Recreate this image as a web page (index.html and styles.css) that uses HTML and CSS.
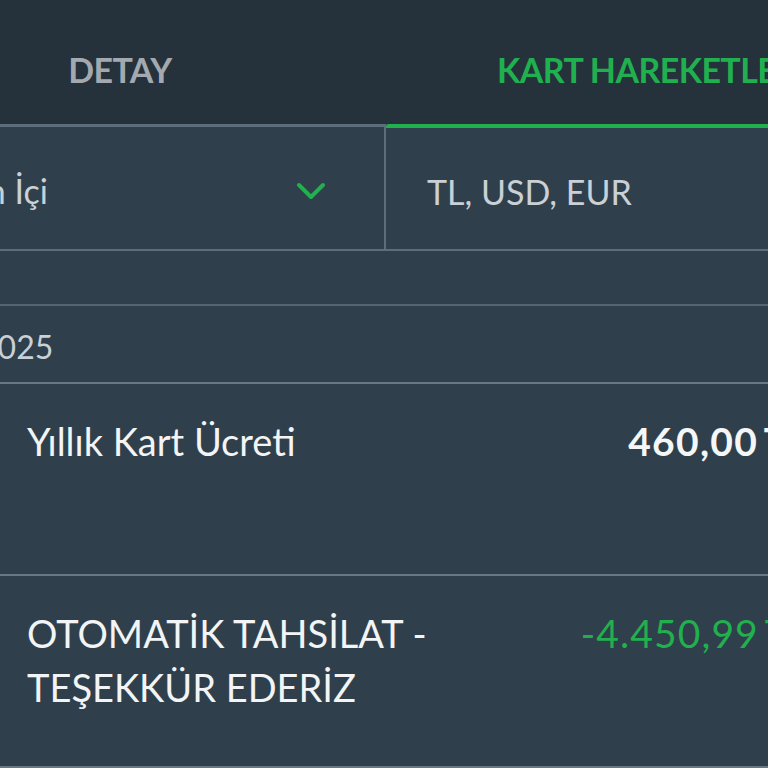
FILE: index.html
```html
<!DOCTYPE html>
<html lang="tr">
<head>
<meta charset="utf-8">
<title>Kart Hareketleri</title>
<link rel="stylesheet" href="styles.css">
</head>
<body>
<div class="screen">
  <div class="canvas">
    <div class="tabs">
      <div class="tab">DETAY</div>
      <div class="tab tab-active">KART HAREKETLERİ</div>
    </div>
    <div class="filters">
      <div class="filter filter-left">
        <span class="filter-text">Dönem İçi</span>
        <svg class="chevron" width="30" height="18" viewBox="0 0 30 18"><path d="M3 3 L15 15 L27 3" fill="none" stroke="#22b04f" stroke-width="4" stroke-linecap="round" stroke-linejoin="round"/></svg>
      </div>
      <div class="filter filter-right">
        <span class="filter-text">TL, USD, EUR</span>
      </div>
    </div>
    <div class="spacer-row"></div>
    <div class="date-row"><span class="date-text">Ocak 2025</span></div>
    <div class="item">
      <div class="item-desc">Yıllık Kart Ücreti</div>
      <div class="item-amount">460,00 TL</div>
    </div>
    <div class="item">
      <div class="item-desc">OTOMATİK TAHSİLAT -<br>TEŞEKKÜR EDERİZ</div>
      <div class="item-amount amount-green">-4.450,99 TL</div>
    </div>
  </div>
</div>
</body>
</html>
```
FILE: styles.css
```css
html, body {
  margin: 0;
  padding: 0;
  background: #2f404c;
}
.screen {
  width: 768px;
  height: 768px;
  overflow: hidden;
  background: #2f404c;
  font-family: Lato, "Open Sans", sans-serif;
}
.canvas {
  width: 1064px;
  margin-left: -146px;
}
.tabs {
  display: grid;
  grid-template-columns: 532px 532px;
  background: #25313b;
  height: 124px;
}
.tab {
  text-align: center;
  font-weight: 700;
  font-size: 34px;
  line-height: 42px;
  padding-top: 49px;
  color: #a3a9ae;
  letter-spacing: -0.6px;
}
.tab-active {
  color: #20b04f;
}
.filters {
  display: grid;
  grid-template-columns: 532px 532px;
  height: 127px;
}
.filter {
  display: flex;
  align-items: flex-start;
  box-sizing: border-box;
  border-bottom: 2px solid #5d6d79;
  padding-top: 43px;
}
.filter-left {
  border-top: 3px solid #5d6d79;
  border-right: 2px solid #5d6d79;
  padding-left: 42px;
  padding-right: 58px;
  justify-content: space-between;
}
.filter-right {
  border-top: 4px solid #22b04f;
  border-top-left-radius: 3px;
  padding-left: 41px;
}
.filter-text {
  font-size: 34px;
  line-height: 41px;
  color: #c9d0d6;
}
.chevron {
  margin-top: 12px;
}
.spacer-row {
  height: 53px;
  border-bottom: 2px solid #546571;
}
.date-row {
  height: 78px;
  box-sizing: border-box;
  border-bottom: 2px solid #667884;
  padding-top: 22px;
  padding-left: 44px;
}
.date-text {
  font-size: 32px;
  line-height: 38px;
  color: #c9d0d6;
}
.item {
  display: flex;
  justify-content: space-between;
  align-items: flex-start;
  box-sizing: border-box;
  height: 192px;
  border-bottom: 2px solid #667884;
  padding: 30px 108px 0 173px;
}
.item-desc {
  font-size: 38px;
  line-height: 54px;
  color: #f2f4f5;
}
.item-amount {
  font-size: 39px;
  line-height: 54px;
  font-weight: 700;
  letter-spacing: 1.3px;
  word-spacing: -4px;
  color: #f4f6f7;
}
.amount-green {
  font-weight: 400;
  letter-spacing: 1.1px;
  color: #22b04f;
}
```
